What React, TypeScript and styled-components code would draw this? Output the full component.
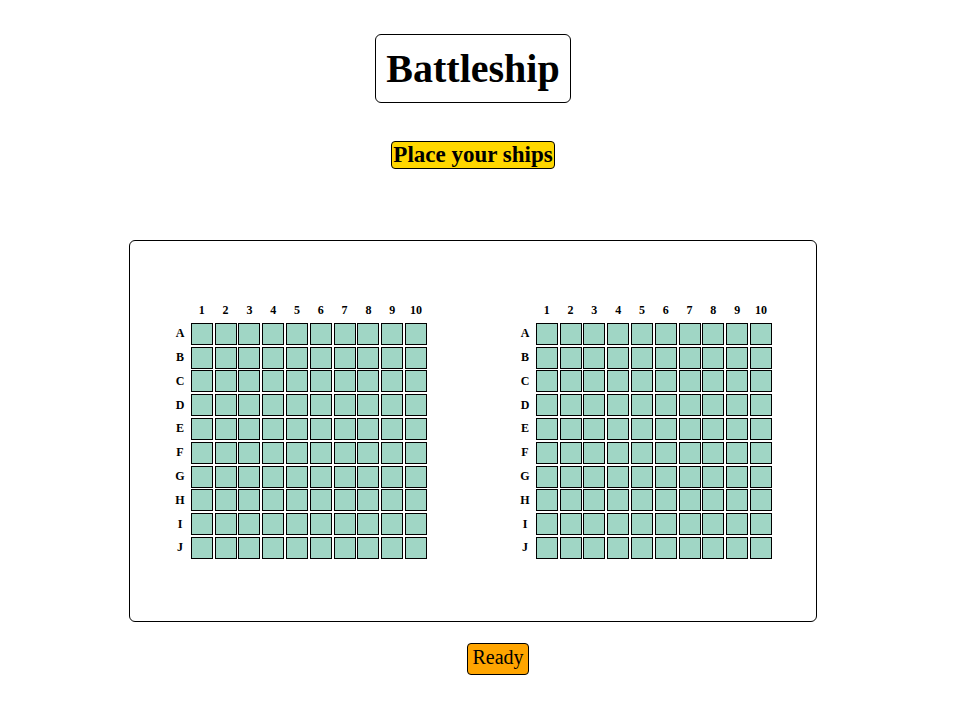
import React from "react";
import styled, { createGlobalStyle } from "styled-components";

const GlobalStyle = createGlobalStyle`
  html, body {
    margin: 0;
    padding: 0;
    background: #ffffff;
    font-family: "Liberation Serif", "Times New Roman", serif;
    color: #000;
  }
`;

const Page = styled.div`
  width: 946px;
  display: flex;
  flex-direction: column;
  align-items: center;
  padding-top: 34px;
`;

const Title = styled.h1`
  margin: 0;
  padding: 10.5px 10px;
  border: 1px solid #000;
  border-radius: 6px;
  font-size: 40px;
  font-weight: bold;
  line-height: 46px;
`;

const Status = styled.div`
  margin-top: 38px;
  padding: 0 1px;
  background: #ffd700;
  border: 1px solid #000;
  border-radius: 4px;
  font-size: 23px;
  font-weight: bold;
  line-height: 26px;
`;

const Arena = styled.div`
  box-sizing: border-box;
  margin-top: 71px;
  width: 688px;
  height: 382px;
  border: 1px solid #000;
  border-radius: 6px;
  padding: 62px 0 0 39px;
  display: flex;
  gap: 87px;
`;

const Board = styled.div`
  display: grid;
  grid-template-columns: 20px repeat(10, 22px);
  grid-template-rows: 18px repeat(10, 22px);
  column-gap: 1.8px;
  row-gap: 1.8px;
`;

const ColLabel = styled.div`
  font-size: 12px;
  font-weight: bold;
  line-height: 14px;
  text-align: center;
  align-self: start;
`;

const RowLabel = styled.div`
  font-size: 12px;
  font-weight: bold;
  line-height: 14px;
  text-align: center;
  align-self: center;
  padding-left: 2px;
  padding-bottom: 1px;
`;

const Cell = styled.div`
  box-sizing: border-box;
  width: 22px;
  height: 22px;
  border: 1px solid #000;
  background: #a0d6c5;
`;

const ReadyButton = styled.button`
  margin-top: 21px;
  margin-left: 50px;
  padding: 2px 4.5px 5px;
  background: #ffa500;
  border: 1px solid #000;
  border-radius: 4px;
  font-family: "Liberation Serif", "Times New Roman", serif;
  font-size: 20px;
  line-height: 23px;
  color: #000;
  cursor: pointer;
`;

const ROWS = ["A", "B", "C", "D", "E", "F", "G", "H", "I", "J"];
const COLS = [1, 2, 3, 4, 5, 6, 7, 8, 9, 10];

function Grid() {
  return (
    <Board>
      <div />
      {COLS.map((c) => (
        <ColLabel key={`c${c}`}>{c}</ColLabel>
      ))}
      {ROWS.map((r) => (
        <React.Fragment key={r}>
          <RowLabel>{r}</RowLabel>
          {COLS.map((c) => (
            <Cell key={`${r}${c}`} />
          ))}
        </React.Fragment>
      ))}
    </Board>
  );
}

export default function App() {
  return (
    <>
      <GlobalStyle />
      <Page>
        <Title>Battleship</Title>
        <Status>Place your ships</Status>
        <Arena>
          <Grid />
          <Grid />
        </Arena>
        <ReadyButton>Ready</ReadyButton>
      </Page>
    </>
  );
}
